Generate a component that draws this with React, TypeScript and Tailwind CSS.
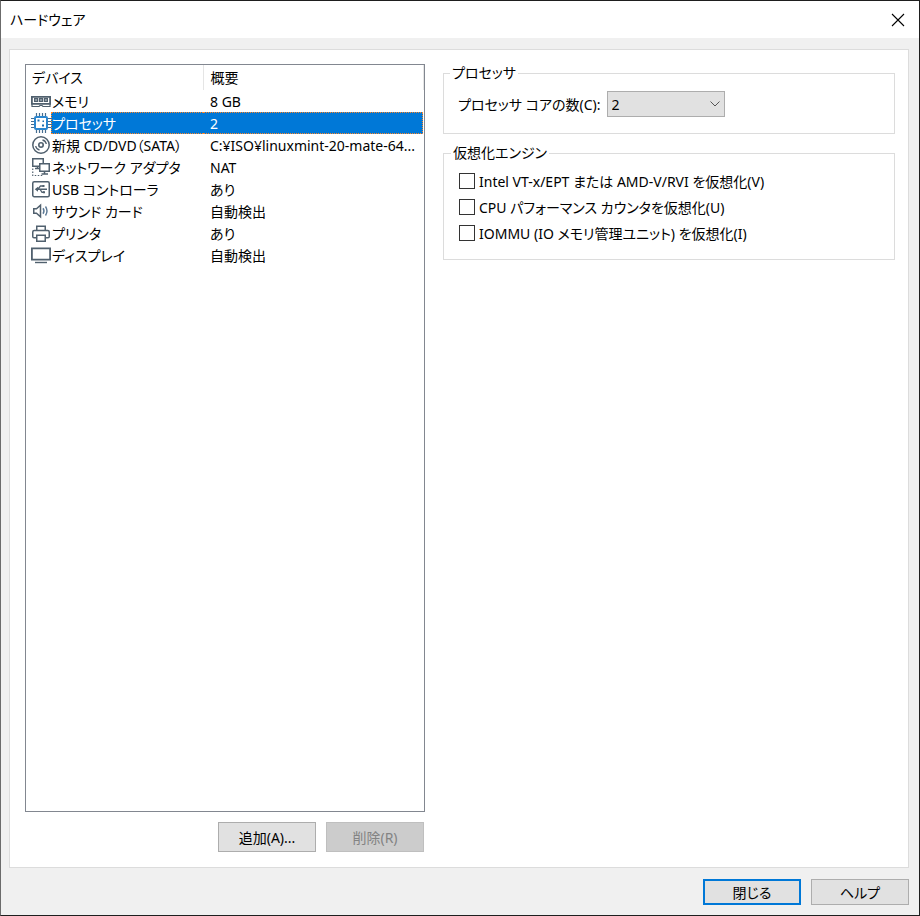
import { useState } from "react";
import type { ReactNode } from "react";

function Icon({ children }: { children: ReactNode }) {
  return (
    <svg
      viewBox="0 0 20 22"
      className="h-[22px] w-5 shrink-0"
      fill="none"
      stroke="#50606e"
      strokeWidth="1.5"
      aria-hidden="true"
    >
      {children}
    </svg>
  );
}

function MemoryIcon() {
  return (
    <Icon>
      <path d="M.9 6.9h18.2v7H.9z" strokeWidth="1.8" />
      <path d="M1 14v2.5h7l1-1h2l1 1h7V14" strokeWidth="1.2" />
      <path d="M3.6 8.6h3v2.8h-3zM8.5 8.6h3v2.8h-3zM13.4 8.6h3v2.8h-3z" fill="#a9b2ba" strokeWidth="1.2" />
    </Icon>
  );
}

function ProcessorIcon() {
  return (
    <Icon>
      <path
        d="M5.5 1v3M8.5 1v3M11.5 1v3M14.5 1v3M5.5 18v3M8.5 18v3M11.5 18v3M14.5 18v3M0 6.5h3M0 9.5h3M0 12.5h3M0 15.5h3M17 6.5h3M17 9.5h3M17 12.5h3M17 15.5h3"
        stroke="#456d90"
        strokeWidth="1.2"
      />
      <rect x="4" y="5" width="12" height="12" rx="1" stroke="#2b86cf" strokeWidth="2" />
      <path d="M6.5 7.5h2v2h-2zM11.5 8.5H13V10h-1.5zM11 12.5h2v2h-2z" fill="#1d6eb0" stroke="none" />
    </Icon>
  );
}

function DiscIcon() {
  return (
    <Icon>
      <circle cx="10" cy="11" r="8.2" />
      <circle cx="10" cy="11" r="2.2" strokeWidth="1.6" />
      <path d="M11.5 6q3.2.8 3.8 4M8.5 16q-3.2-.8-3.8-4" strokeWidth="1.3" />
    </Icon>
  );
}

function NetworkIcon() {
  return (
    <Icon>
      <path d="M1.75 2.75h10.5v7.5H1.75zM4 12.5h4M6.5 10v2.5" />
      <path d="M8.75 7.75h9.5v7.5h-9.5z" fill="#fff" />
      <path d="M13.5 15.5v2.5M10.5 18h6.5" />
      <path d="M1.75 12.5v7H12" strokeWidth="1.2" strokeDasharray="1.5 1.5" />
    </Icon>
  );
}

function UsbIcon() {
  return (
    <Icon>
      <rect x="1.75" y="3.75" width="16.5" height="15" rx="1.5" />
      <path d="M5 11.25h11M7 11l2.5-3H12M9 11.25l2 3h2" strokeWidth="1.3" />
      <path d="M7 8.75v5L3.75 11.25zM11.5 7h2v2h-2zM12 13.3h2v2h-2z" fill="#50606e" stroke="none" />
    </Icon>
  );
}

function SoundIcon() {
  return (
    <Icon>
      <path d="M2.75 8.75h2.75l4-3.5v11.5l-4-3.5H2.75z" />
      <path d="M12 8.25q2 2.75 0 5.5M14.5 6.5q3 4.5 0 9" stroke="#5b7894" strokeWidth="1.4" />
    </Icon>
  );
}

function PrinterIcon() {
  return (
    <Icon>
      <path d="M5.75 8.5v-4.25h8.5V8.5" />
      <path d="M5.5 15.75H3a1.25 1.25 0 0 1-1.25-1.25V10A1.5 1.5 0 0 1 3.25 8.5h13.5a1.5 1.5 0 0 1 1.5 1.5v4.5A1.25 1.25 0 0 1 17 15.75h-2.5" />
      <path d="M5.75 13.25h8.5v6h-8.5z" />
    </Icon>
  );
}

function DisplayIcon() {
  return (
    <Icon>
      <path d="M.9 4.4h18.2v11.2H.9z" strokeWidth="1.8" />
      <path d="M4 18.5h12" strokeWidth="1.4" />
    </Icon>
  );
}

const devices = [
  { name: "メモリ", summary: "8 GB", icon: <MemoryIcon /> },
  { name: "プロセッサ", summary: "2", icon: <ProcessorIcon /> },
  { name: "新規 CD/DVD（SATA）", summary: "C:¥ISO¥linuxmint-20-mate-64...", icon: <DiscIcon /> },
  { name: "ネットワーク アダプタ", summary: "NAT", icon: <NetworkIcon /> },
  { name: "USB コントローラ", summary: "あり", icon: <UsbIcon /> },
  { name: "サウンド カード", summary: "自動検出", icon: <SoundIcon /> },
  { name: "プリンタ", summary: "あり", icon: <PrinterIcon /> },
  { name: "ディスプレイ", summary: "自動検出", icon: <DisplayIcon /> },
];

const engineOptions = [
  "Intel VT-x/EPT または AMD-V/RVI を仮想化(V)",
  "CPU パフォーマンス カウンタを仮想化(U)",
  "IOMMU (IO メモリ管理ユニット) を仮想化(I)",
];

function DeviceTable() {
  const [selected, setSelected] = useState(1);

  return (
    <div className="flex-1 border border-[#828790]">
      <table className="w-full table-fixed border-collapse text-left">
        <thead>
          <tr className="h-[25px]">
            <th className="w-[177px] p-0 pl-[6px] font-normal">デバイス</th>
            <th className="border-x border-[#e5e5e5] p-0 pl-[7px] font-normal">概要</th>
          </tr>
        </thead>
        <tbody>
          {devices.map((device, i) => {
            const active = i === selected;
            return (
              <tr key={device.name} className="h-[22px]" onClick={() => setSelected(i)}>
                <td className="p-0 pl-[5px]">
                  <div className="flex h-[22px]">
                    {device.icon}
                    <span
                      className={
                        active
                          ? "flex-1 border-y border-l border-dotted border-[#ff8728] bg-[#0078d7] leading-[22px] text-white"
                          : "flex-1 pl-px leading-6"
                      }
                    >
                      {device.name}
                    </span>
                  </div>
                </td>
                <td className="p-0 pr-px">
                  <div
                    className={
                      active
                        ? "h-[22px] border-y border-r border-dotted border-[#ff8728] bg-[#0078d7] pl-[7px] leading-[22px] text-white"
                        : "h-[22px] pl-[7px] leading-6"
                    }
                  >
                    {device.summary}
                  </div>
                </td>
              </tr>
            );
          })}
        </tbody>
      </table>
    </div>
  );
}

export default function App() {
  return (
    <div className="flex min-h-screen flex-col border border-[#1e1e1e] border-l-[#6b6b6b] bg-[#f0f0f0] font-['Noto_Sans','Noto_Sans_CJK_JP',sans-serif] text-[14px] whitespace-nowrap text-black [font-feature-settings:'palt']">
      <header className="flex h-[37px] items-center justify-between bg-white pr-[14px] pl-[9px]">
        <h1>ハードウェア</h1>
        <button type="button" aria-label="閉じる">
          <svg viewBox="0 0 14 14" className="size-[14px]" stroke="#000" strokeWidth="1.1" aria-hidden="true">
            <path d="m1 1 12 12M13 1 1 13" />
          </svg>
        </button>
      </header>

      <main className="mt-[11px] mr-[10px] ml-2 flex flex-1 gap-[18px] border border-[#dcdcdc] bg-white pt-[14px] pr-[13px] pb-[15px] pl-[15px]">
        <div className="flex w-[400px] shrink-0 flex-col">
          <DeviceTable />
          <div className="mt-[10px] mr-px flex justify-end gap-[10px]">
            <button type="button" className="h-[30px] w-[98px] border border-[#adadad] bg-[#e1e1e1]">
              追加(A)...
            </button>
            <button
              type="button"
              disabled
              className="h-[30px] w-[98px] border border-[#bfbfbf] bg-[#cccccc] text-[#838383]"
            >
              削除(R)
            </button>
          </div>
        </div>

        <div className="flex-1">
          <fieldset className="border border-[#dcdcdc] pb-4 pl-[14px]">
            <legend className="-ml-2 px-[2px] leading-[18px]">プロセッサ</legend>
            <div className="mt-[9px] flex items-center gap-[6px]">
              <label htmlFor="cores">プロセッサ コアの数(C):</label>
              <div className="relative">
                <select
                  id="cores"
                  defaultValue="2"
                  className="block h-[26px] w-[118px] appearance-none border border-[#adadad] bg-[#e1e1e1] pl-1"
                >
                  <option>1</option>
                  <option>2</option>
                  <option>4</option>
                  <option>8</option>
                </select>
                <svg
                  viewBox="0 0 10 6"
                  className="pointer-events-none absolute top-[10px] right-[5px] h-[6px] w-[10px]"
                  fill="none"
                  stroke="#555"
                  aria-hidden="true"
                >
                  <path d="M.5.5 5 5 9.5.5" />
                </svg>
              </div>
            </div>
          </fieldset>

          <fieldset className="mt-[10px] border border-[#dcdcdc] pb-[13px] pl-[15px]">
            <legend className="-ml-2 px-[2px] leading-[18px]">仮想化エンジン</legend>
            <div className="mt-[6px]">
              {engineOptions.map((option) => (
                <label key={option} className="flex h-[26px] items-center gap-1">
                  <input type="checkbox" className="size-4 appearance-none border border-[#333] bg-white checked:bg-[#0078d7]" />
                  {option}
                </label>
              ))}
            </div>
          </fieldset>
        </div>
      </main>

      <footer className="mr-[10px] flex justify-end gap-[10px] pt-[11px] pb-[10px]">
        <button type="button" className="h-[26px] w-[98px] border-2 border-[#0078d7] bg-[#e1e1e1]">
          閉じる
        </button>
        <button type="button" className="h-[26px] w-[98px] border border-[#adadad] bg-[#e1e1e1]">
          ヘルプ
        </button>
      </footer>
    </div>
  );
}
